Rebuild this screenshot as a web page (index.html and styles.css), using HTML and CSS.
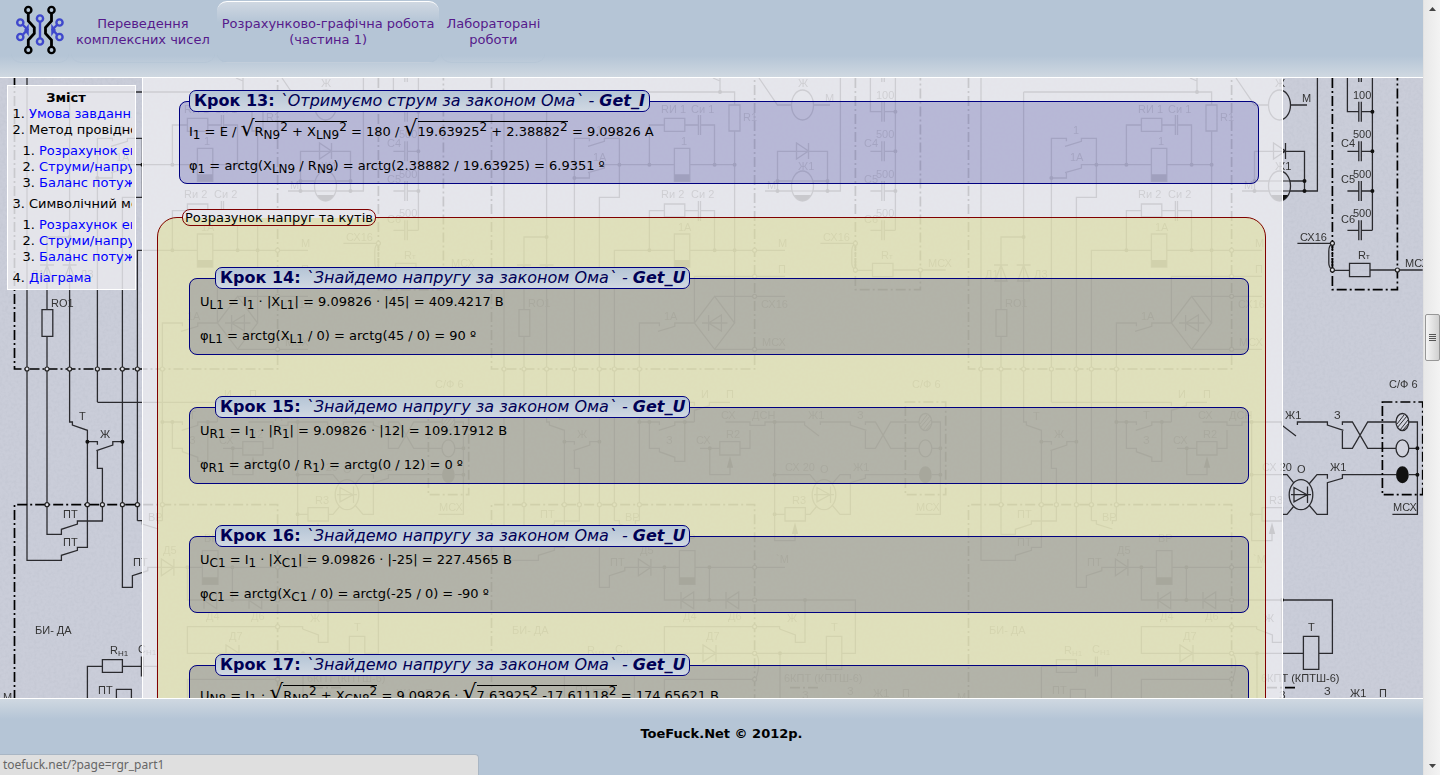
FILE: index.html
```html
<!DOCTYPE html>
<html lang="uk">
<head>
<meta charset="utf-8">
<title>Розрахунково-графічна робота</title>
<link rel="stylesheet" href="styles.css">
</head>
<body>
<div class="page">
  <header class="header">
    <nav class="nav">
      <a class="tab logo" href="#home" aria-label="Головна">
        <svg width="50" height="50" viewBox="15 5 50 50" fill="none" stroke-width="2.4">
          <g stroke="#000">
            <circle cx="28.3" cy="10" r="3.1"/><circle cx="51.5" cy="10" r="3.1"/>
            <circle cx="28.3" cy="50" r="3.1"/><circle cx="51.5" cy="50" r="3.1"/>
            <path d="M28.300 13v8l6 6.500v6l-6 6.500v7M51.500 13v8l-6 6.500v6l6 6.500v7" stroke-width="2.800"/>
          </g>
          <g stroke="#3f48cc">
            <circle cx="40" cy="18.500" r="3.100"/><circle cx="40" cy="41.500" r="3.100"/>
            <circle cx="20.300" cy="22.500" r="3.100"/><circle cx="20.300" cy="37" r="3.100"/>
            <circle cx="59.500" cy="22.500" r="3.100"/><circle cx="59.500" cy="37" r="3.100"/>
            <path d="M40 21v17M23 25l4.500 4.500-4.500 5M57 25l-4.500 4.500 4.500 5"/>
            <path d="M28 26v8l-3-4zM52 26v8l3-4z" fill="#3f48cc" stroke-width="1.500"/>
          </g>
        </svg>
      </a>
      <a class="tab" href="#complex">Переведення<br>комплексних чисел</a>
      <a class="tab active" href="#rgr_part1">Розрахунково-графічна робота<br>(частина 1)</a>
      <a class="tab" href="#labs">Лабораторані<br>роботи</a>
    </nav>
  </header>

  <main class="main">
    <svg class="scheme" width="100%" height="100%" aria-hidden="true">
      <defs>
        <filter id="grain" x="0" y="0" width="100%" height="100%">
          <feTurbulence type="fractalNoise" baseFrequency="0.35" numOctaves="2" seed="4"/>
          <feColorMatrix values="0 0 0 0 .4  0 0 0 0 .43  0 0 0 0 .5  .35 0 0 0 -.13"/>
        </filter>
        <pattern id="tile" patternUnits="userSpaceOnUse" width="477" height="775" patternTransform="translate(0 -78)">
          <g fill="none" stroke="#2a2a2e" stroke-width="1.3">
            <path d="M243 78v14M236 78l7 3M69.600 92H257.600V105M252 105h11v26h-11zM257.600 131V323M97.400 402V138.300h15v3M111 146.300l16.400-5v-3h15V197.300h-20V587.300h10V575.700l15.400-5v-3.400H203M97.400 178h15v-5M111 172.700l16.400-4.700v-3.300h70M197.400 148.300h15.400v33h-15.400zM212.800 164.700h44.800M172.400 164.700V125h15M187.400 118.300h20.400v13h-20.400zM207.800 125h13.600M223.500 125h14v39.700M221.400 115v20M223.500 115v20"/>
            <path d="M172.400 250.300v-39.600h15M187.400 204h20.400v13h-20.400zM207.800 210.700h13.600M223.500 210.700h14v39.600M221.400 201v20M223.500 201v20M137.400 520.700V250.300h60M197.400 234h15.400v33h-15.400zM212.800 250.300H308M217.400 323v-46.700H308M237.600 296.300l20 26.700-20 26.300-20.200-26.300zM237.600 296.300H308M237.600 349.300H308M225 323h25.500M231.600 315v16M231.600 323l12.800-8v16zM162.400 520.700V323h20v3.300M181 331.300l16.800-5V323h19.600"/>
            <path d="M27 78V560.300h34.400v-5l16-5v-3h10V430.300L72.400 425v-3h-2.800V92M47 336.300v198h14.400v-5l16-5.300v-3h25v-52.700h-5v-17.600M96.400 450.700l16.400-5.700v-3.300h9.600M87.400 441.700h10v3M42 309.700h10.800v26.600H42zM47 309.700V237h22.600M41 281h12l-6-16zM40 265h14M63.600 281h12l-6-16zM62.600 265h14M97.400 402.300h120v3.400M217.400 422v-11.700l15-4.600v-3.400H253"/>
            <path d="M162.400 422h20v3M181.700 430.300l16.100-5V422h19.600M172.400 422v26.300h10v3.400l15.400 5.600v4h10V422M248.500 422H273v3.300h15V422h39.600v3L342 436M343.400 425v-3h30v3l16 5.300M388.400 430v18.300h10l15.300-26.300H442M388.400 425v-3h10l15.300 26.300H442M455 422h8.400v92.300h-25M455 448.300h8.400M455 474.700h8.400M223 448.300h20M242.800 441.700H263V455h-20.200zM263 448.300h10V430M232.800 448.300v26.400H253V466M297.600 422v118.700H318V532M297.600 474.700H333l7 8.500M297.600 514.300H308M308 507.700h20.400V521H308zM328.400 514.300h4.600l7-8.300M355 505l8 9.300h10.400v-31.600l15-4.400v-3.600H442M355 484l8-9.300h10.400v4M337 494.700h20M340 487.500v14.400l13-7.200zM353.500 486.500v16.400"/>
            <path d="M137.400 520.700h5v3.300l16 5M162.400 520.700h-4v3.300M161.400 559v16.700l12.500-8.400zM173.900 559v16.700M202.400 550.700H218v33.600h-15.600zM218 567.300h90M187.400 567.300V600h191v53.300h-13.600M232.400 567.300V600M216.700 592v16.700L204 600.300zM204 592v16.700M261.700 592v16.700L249 600.300zM249 592v16.700M302.600 629v-2.300H187.400v26.600h162M302.600 629l15.800 6v7.300H328V600M226 645v16.700l13-8.400zM239 645v16.700M349.400 636.300h15.400v33h-15.400zM303 653.300V700M187.400 700v-20.700h90.200M277.600 653.300q5 2 4 13t-4 13M87.400 700v-33.700h15M102.400 659.700h20v12.600h-20zM122.400 666.300h19M143.400 666.300h14V700M141.400 656.500v20M143.400 656.500v20M116.400 700v-10.700h15V700"/>
            <path d="M282 78l18.500 27h14M336.500 105H353M363.400 78V191H288M300.500 191v-39.700h50V191M319.500 143v16l12-8zM331.500 143v16M300.500 181h50M393.400 78v33.700h11.400M407.300 111.700h11.100M418.400 78V230.300M393.400 151.300h11.400M407.300 151.300h11.100M393.400 191h11.400M407.300 191h11.100M393.400 230.300h11.400M407.300 230.300h11.100M404.800 101.700v20M407.300 101.700v20M404.800 141.300v20M407.300 141.300v20M404.800 181v20M407.300 181v20M404.800 220.300v20M407.300 220.300v20M404.800 78v4M407.300 78v4M343.400 243.300h35q-3.600 2-3.600 8v12q0 4 3.600 7h17M395.500 263.300H416v13.400h-20.500zM416 270h52.700"/>
          </g>
          <g fill="none" stroke="#000" stroke-width="1.700" stroke-dasharray="10 3 2 3">
            <path d="M14.500 78V369H277.600V78M14.500 700V504.700H277.600V700M378.400 78V289.700h65V78M428.400 402h40.300v92.700h-40.300zM313 687.700h28"/>
            <path d="M378.400 243v27" stroke-dasharray="2 1"/>
          </g>
          <g fill="#e5e5eb" fill-opacity=".3" stroke="#2a2a2e" stroke-width="1.300">
            <ellipse cx="325.500" cy="105" rx="11" ry="15"/><ellipse cx="325.500" cy="186" rx="11" ry="15"/>
            <ellipse cx="448.400" cy="422" rx="6.400" ry="8.500"/><ellipse cx="448.400" cy="448.300" rx="6.400" ry="8.500"/>
            <ellipse cx="347" cy="494.700" rx="11.800" ry="15" fill="none"/>
            <path d="M443 424l7-9M443 428l10-12M446 430l8-10M449 430l6-7" stroke-width="1"/>
          </g>
          <g fill="#111">
            <ellipse cx="448.400" cy="474.700" rx="6.400" ry="8.500"/>
            <path d="M317 195h17q-3.500 6-8.500 6t-8.500-6zM197.400 174.300h15.400v7h-15.400zM197.400 260h15.400v7h-15.400zM202.400 577.300H218v7h-15.600zM253 456l-3.200 11.700h6.400zM318 522.300l-3.200 11.700h6.400z"/>
          </g>
          <path d="M243 92h0M237.600 164.700h0M257.600 164.700h0M97.400 178h0M142.400 164.700h0M172.400 164.700h0M172.400 250.300h0M237.600 250.300h0M257.600 250.300h0M69.600 237h0M300.500 181h0M300.500 191h0M350.500 181h0M350.500 191h0M418.400 111.700h0M418.400 151.300h0M418.400 191h0M87.400 441.700h0M122.400 441.700h0M162.400 422h0M172.400 422h0M207.800 422h0M232.800 448.300h0M297.600 422h0M297.600 474.700h0M297.600 514.300h0M463.400 448.300h0M463.400 474.700h0M187.400 567.300h0M232.400 567.300h0M232.400 600h0M328 600h0M303 653.300h0" fill="none" stroke="#111" stroke-width="4" stroke-linecap="round"/>
          <g fill="#e5e5eb" stroke="#222" stroke-width="1.200">
            <circle cx="27" cy="369" r="2"/><circle cx="47" cy="369" r="2"/><circle cx="69.600" cy="369" r="2"/><circle cx="97.400" cy="369" r="2"/><circle cx="122.400" cy="369" r="2"/><circle cx="137.400" cy="369" r="2"/><circle cx="162.400" cy="369" r="2"/>
            <circle cx="47" cy="504.700" r="2"/><circle cx="87.400" cy="504.700" r="2"/><circle cx="102.400" cy="504.700" r="2"/><circle cx="122.400" cy="504.700" r="2"/><circle cx="137.400" cy="504.700" r="2"/><circle cx="162.400" cy="504.700" r="2"/>
            <circle cx="277.600" cy="250.300" r="2"/><circle cx="277.600" cy="276.300" r="2"/><circle cx="277.600" cy="296.300" r="2"/><circle cx="277.600" cy="349.300" r="2"/><circle cx="277.600" cy="567.300" r="2"/><circle cx="277.600" cy="600" r="2"/><circle cx="277.600" cy="626.700" r="2"/><circle cx="277.600" cy="653.300" r="2"/><circle cx="277.600" cy="679.300" r="2"/>
            <circle cx="378.400" cy="243.300" r="2"/><circle cx="378.400" cy="270" r="2"/><circle cx="443.400" cy="270" r="2"/>
          </g>
          <g class="scheme-text">
            <text x="119" y="134">1</text><text x="116" y="161">1А</text><text x="184" y="113">RИ 1</text><text x="214" y="113">Си 1</text><text x="204" y="145">1</text><text x="266" y="121">R1</text>
            <text x="184" y="198">Rи 2</text><text x="214" y="198">Си 2</text><text x="201" y="231">1А</text><text x="187" y="320">1А</text>
            <text x="31" y="278">Д1</text><text x="80" y="278">Д3</text><text x="51" y="307">RO1</text>
            <text x="321" y="87">Ж</text><text x="348" y="102">М</text><text x="321" y="170">Ж1</text><text x="290" y="189">М</text>
            <text x="399" y="99">100</text><text x="399" y="138">500</text><text x="399" y="178">500</text><text x="399" y="217">500</text>
            <text x="387" y="147">C4</text><text x="387" y="183">C5</text><text x="387" y="223">C6</text>
            <text x="346" y="241">СХ16</text><text x="404" y="259">R<tspan class="small">т</tspan></text><text x="451" y="267">МСХ</text>
            <text x="301" y="247">М</text><text x="301" y="273">П</text><text x="284" y="308">СХ16</text><text x="285" y="346">МСХ</text>
            <text x="79" y="420">Т</text><text x="100" y="438">Ж</text><text x="63" y="518">ПТ</text><text x="63" y="546">ПТ</text>
            <text x="224" y="398">И</text><text x="249" y="398">П</text><text x="189" y="419">Т</text><text x="189" y="444">З</text><text x="244" y="419">СХ</text><text x="275" y="419">ДСН</text><text x="219" y="444">СХ</text><text x="249" y="438">R2</text>
            <text x="331" y="419">Ж1</text><text x="380" y="419">З</text><text x="435" y="388">С/Ф 6</text><text x="439" y="511">МСХ</text>
            <text x="308" y="471">СХ 20</text><text x="343" y="473">О</text><text x="376" y="471">Ж1</text><text x="315" y="504">R3</text>
            <text x="148" y="521">ВР</text><text x="133" y="566">ПТ</text><text x="163" y="554">Д5</text><text x="204" y="542">ВР</text><text x="299" y="563">`М</text><text x="206" y="620">Д4</text><text x="251" y="620">Д6</text>
            <text x="310" y="622">Ж</text><text x="354" y="631">Т</text><text x="229" y="640">Д7</text><text x="35" y="634">БИ- ДА</text>
            <text x="110" y="654">R<tspan class="small" dy="2">Н1</tspan></text><text x="138" y="653">С<tspan class="small" dy="2">Н1</tspan></text><text x="98" y="694">ПТ</text>
            <text x="307" y="682">6КПТ (КПТШ-6)</text><text x="325" y="699">З</text><text x="370" y="695">З</text><text x="396" y="697">Ж1</text><text x="425" y="697">П</text><text x="3" y="701">М</text>
          </g>
        </pattern>
      </defs>
      <rect width="100%" height="100%" fill="#cacdd9"/>
      <rect width="100%" height="100%" filter="url(#grain)"/>
      <rect width="100%" height="100%" fill="url(#tile)"/>
    </svg>

    <aside class="toc">
      <h2>Зміст</h2>
      <ol>
        <li><a href="#task">Умова завдання</a></li>
        <li>Метод провідностей
          <ol>
            <li><a href="#eq1">Розрахунок еквівалентних</a></li>
            <li><a href="#cur1">Струми/напруги</a></li>
            <li><a href="#bal1">Баланс потужностей</a></li>
          </ol>
        </li>
        <li>Символічний метод
          <ol>
            <li><a href="#eq2">Розрахунок еквівалентних</a></li>
            <li><a href="#cur2">Струми/напруги</a></li>
            <li><a href="#bal2">Баланс потужностей</a></li>
          </ol>
        </li>
        <li><a href="#diagram">Діаграма</a></li>
      </ol>
    </aside>

    <article class="content">
      <fieldset class="step">
        <legend><b>Крок 13:</b> <i>`Отримуємо струм за законом Ома` - <b>Get_I</b></i></legend>
        <p class="tall">I<sub>1</sub> = E / <span class="sqrt">√</span><span class="root">R<sub>N9</sub><sup>2</sup> + X<sub>LN9</sub><sup>2</sup></span> = 180 / <span class="sqrt">√</span><span class="root">19.63925<sup>2</sup> + 2.38882<sup>2</sup></span> = 9.09826 А</p>
        <p>φ<sub>1</sub> = arctg(X<sub>LN9</sub> / R<sub>N9</sub>) = arctg(2.38882 / 19.63925) = 6.9351 º</p>
      </fieldset>

      <fieldset class="group">
        <legend>Розразунок напруг та кутів</legend>
        <fieldset class="step">
          <legend><b>Крок 14:</b> <i>`Знайдемо напругу за законом Ома` - <b>Get_U</b></i></legend>
          <p>U<sub>L1</sub> = I<sub>1</sub> · |X<sub>L1</sub>| = 9.09826 · |45| = 409.4217 В</p>
          <p>φ<sub>L1</sub> = arctg(X<sub>L1</sub> / 0) = arctg(45 / 0) = 90 º</p>
        </fieldset>
        <fieldset class="step">
          <legend><b>Крок 15:</b> <i>`Знайдемо напругу за законом Ома` - <b>Get_U</b></i></legend>
          <p>U<sub>R1</sub> = I<sub>1</sub> · |R<sub>1</sub>| = 9.09826 · |12| = 109.17912 В</p>
          <p>φ<sub>R1</sub> = arctg(0 / R<sub>1</sub>) = arctg(0 / 12) = 0 º</p>
        </fieldset>
        <fieldset class="step">
          <legend><b>Крок 16:</b> <i>`Знайдемо напругу за законом Ома` - <b>Get_U</b></i></legend>
          <p>U<sub>C1</sub> = I<sub>1</sub> · |X<sub>C1</sub>| = 9.09826 · |-25| = 227.4565 В</p>
          <p>φ<sub>C1</sub> = arctg(X<sub>C1</sub> / 0) = arctg(-25 / 0) = -90 º</p>
        </fieldset>
        <fieldset class="step">
          <legend><b>Крок 17:</b> <i>`Знайдемо напругу за законом Ома` - <b>Get_U</b></i></legend>
          <p class="tall">U<sub>N8</sub> = I<sub>1</sub> · <span class="sqrt">√</span><span class="root">R<sub>N8</sub><sup>2</sup> + X<sub>CN8</sub><sup>2</sup></span> = 9.09826 · <span class="sqrt">√</span><span class="root">7.63925<sup>2</sup> -17.61118<sup>2</sup></span> = 174.65621 В</p>
        </fieldset>
      </fieldset>
    </article>
  </main>

  <footer class="footer">ToeFuck.Net © 2012р.</footer>
</div>
<div class="scrollbar">
  <svg class="arrow" width="7" height="4"><path d="M0 4l3.500-4L7 4z" fill="#444"/></svg>
  <div class="thumb"><span></span><span></span><span></span><span></span></div>
  <svg class="arrow" width="7" height="4"><path d="M0 0l3.500 4L7 0z" fill="#444"/></svg>
</div>
<div class="status">toefuck.net/?page=rgr_part1</div>
</body>
</html>
```
FILE: styles.css
```css
* { box-sizing: border-box; }
body {
  margin: 0;
  height: 100vh;
  display: flex;
  overflow: hidden;
  font: 13px/16px Verdana, "DejaVu Sans", sans-serif;
  color: #000;
}
.page { flex: 1; min-width: 0; display: flex; flex-direction: column; }

.header {
  height: 78px;
  flex: none;
  padding: 1px 11px;
  border-bottom: 1px solid #fff;
  background: linear-gradient(#b5c5d6 56px, #cfd8e1 77px);
}
.nav { display: flex; gap: 2px; }
.tab {
  height: 62px;
  padding: 14px 5px 0;
  border-radius: 10px;
  border-top: 1px solid transparent;
  border-bottom: 1px solid #b0c1d266;
  color: #551a8b;
  text-align: center;
  text-decoration: none;
  white-space: nowrap;
}
.tab.logo { padding: 3px 4px 0; }
.tab.active {
  border-top-color: #fff;
  background: linear-gradient(#d0d8e2, #b5c5d6 20px);
}

.main {
  flex: 1;
  min-height: 0;
  position: relative;
  overflow: hidden;
  display: flex;
  align-items: flex-start;
}
.scheme { position: absolute; inset: 0; }
.scheme-text { font: 11px "Liberation Sans Narrow", "Liberation Sans", sans-serif; fill: #333; }
.scheme-text .small { font-size: 8px; }

.toc {
  position: relative;
  flex: none;
  width: 129px;
  margin: 7px 6px 0 7px;
  padding: 4px 3px 3px 4px;
  border: 1px solid #fff;
  background: #e8e8eddd;
}
.toc h2 { margin: 0; padding-right: 12px; font-size: 13px; line-height: 16px; text-align: center; }
.toc ol { margin: 0; padding-left: 17px; }
.toc > ol { overflow: hidden; white-space: nowrap; }
.toc ol ol { padding: 5px 0 5px 10px; }
.toc a { color: #00f; text-decoration: none; }

.content {
  position: relative;
  flex: 1;
  min-width: 0;
  align-self: stretch;
  overflow: hidden;
  margin-right: 140px;
  padding: 12px 16px 0 14px;
  border: solid #fff;
  border-width: 0 1px;
  background: #eaeaeed9;
}
fieldset { min-width: 0; margin: 0; border: 1px solid navy; }
.step {
  margin: 0 7px 25px 22px;
  padding: 1px 9px 5px;
  border-radius: 8px;
  background: rgba(0, 0, 128, .2);
}
.step > legend {
  padding: 0 4px;
  border: 1px solid navy;
  border-radius: 7px;
  background: linear-gradient(#b5c5d6, #d0d8e2);
  color: #005;
  font-size: 16px;
  line-height: 20px;
}
.group {
  padding: 41px 16px 0 31px;
  border-color: #800000;
  border-radius: 20px;
  background: rgba(217, 218, 139, .5);
}
.group > legend {
  margin-left: -7px;
  padding: 0 2px;
  border: 1px solid #800000;
  border-radius: 8px;
  background: linear-gradient(#e6e6ec 8px, #dfe0b9 8px);
  line-height: 15px;
}
.group .step { margin: 0 0 41px; padding: 1px 10px 6px; background: rgba(0, 0, 96, .2); }
.group .step > legend { margin-left: 15px; }
p { margin: 0 0 10px; line-height: 24px; }
p:last-child { margin-bottom: 0; }
p.tall { margin-top: 7px; }
sub, sup { font-size: 12px; line-height: 0; }
sub { vertical-align: -3px; }
.sqrt { font-size: 22px; line-height: 0; }
.root { padding-top: 2px; border-top: 1px solid #000; }

.footer {
  height: 77px;
  flex: none;
  padding-left: 20px;
  border-top: 1px solid #fff;
  background: linear-gradient(#cfd8e1, #b5c5d6 20px);
  text-align: center;
  font-weight: bold;
  line-height: 70px;
}

.scrollbar {
  width: 17px;
  border-left: 1px solid #e2e2e2;
  background: linear-gradient(90deg, #e8e8e8, #f3f3f3);
  display: flex;
  flex-direction: column;
  align-items: center;
  justify-content: space-between;
  padding: 7px 0;
}
.thumb {
  width: 15px;
  height: 47px;
  margin-top: -100px;
  border: 1px solid #979797;
  border-radius: 2px;
  background: linear-gradient(90deg, #f5f5f5, #d0d0d0);
  display: flex;
  flex-direction: column;
  align-items: center;
  justify-content: center;
  gap: 1px;
}
.thumb span { width: 7px; height: 1px; background: #555; }
.status {
  position: absolute;
  left: 0;
  bottom: 0;
  width: 479px;
  height: 21px;
  padding-left: 3px;
  border: solid #a9b6c4;
  border-width: 1px 1px 0 0;
  border-radius: 0 4px 0 0;
  background: #dfdfdf;
  color: #666;
  font: 12px/20px "Noto Sans", "Open Sans", sans-serif;
}
```
